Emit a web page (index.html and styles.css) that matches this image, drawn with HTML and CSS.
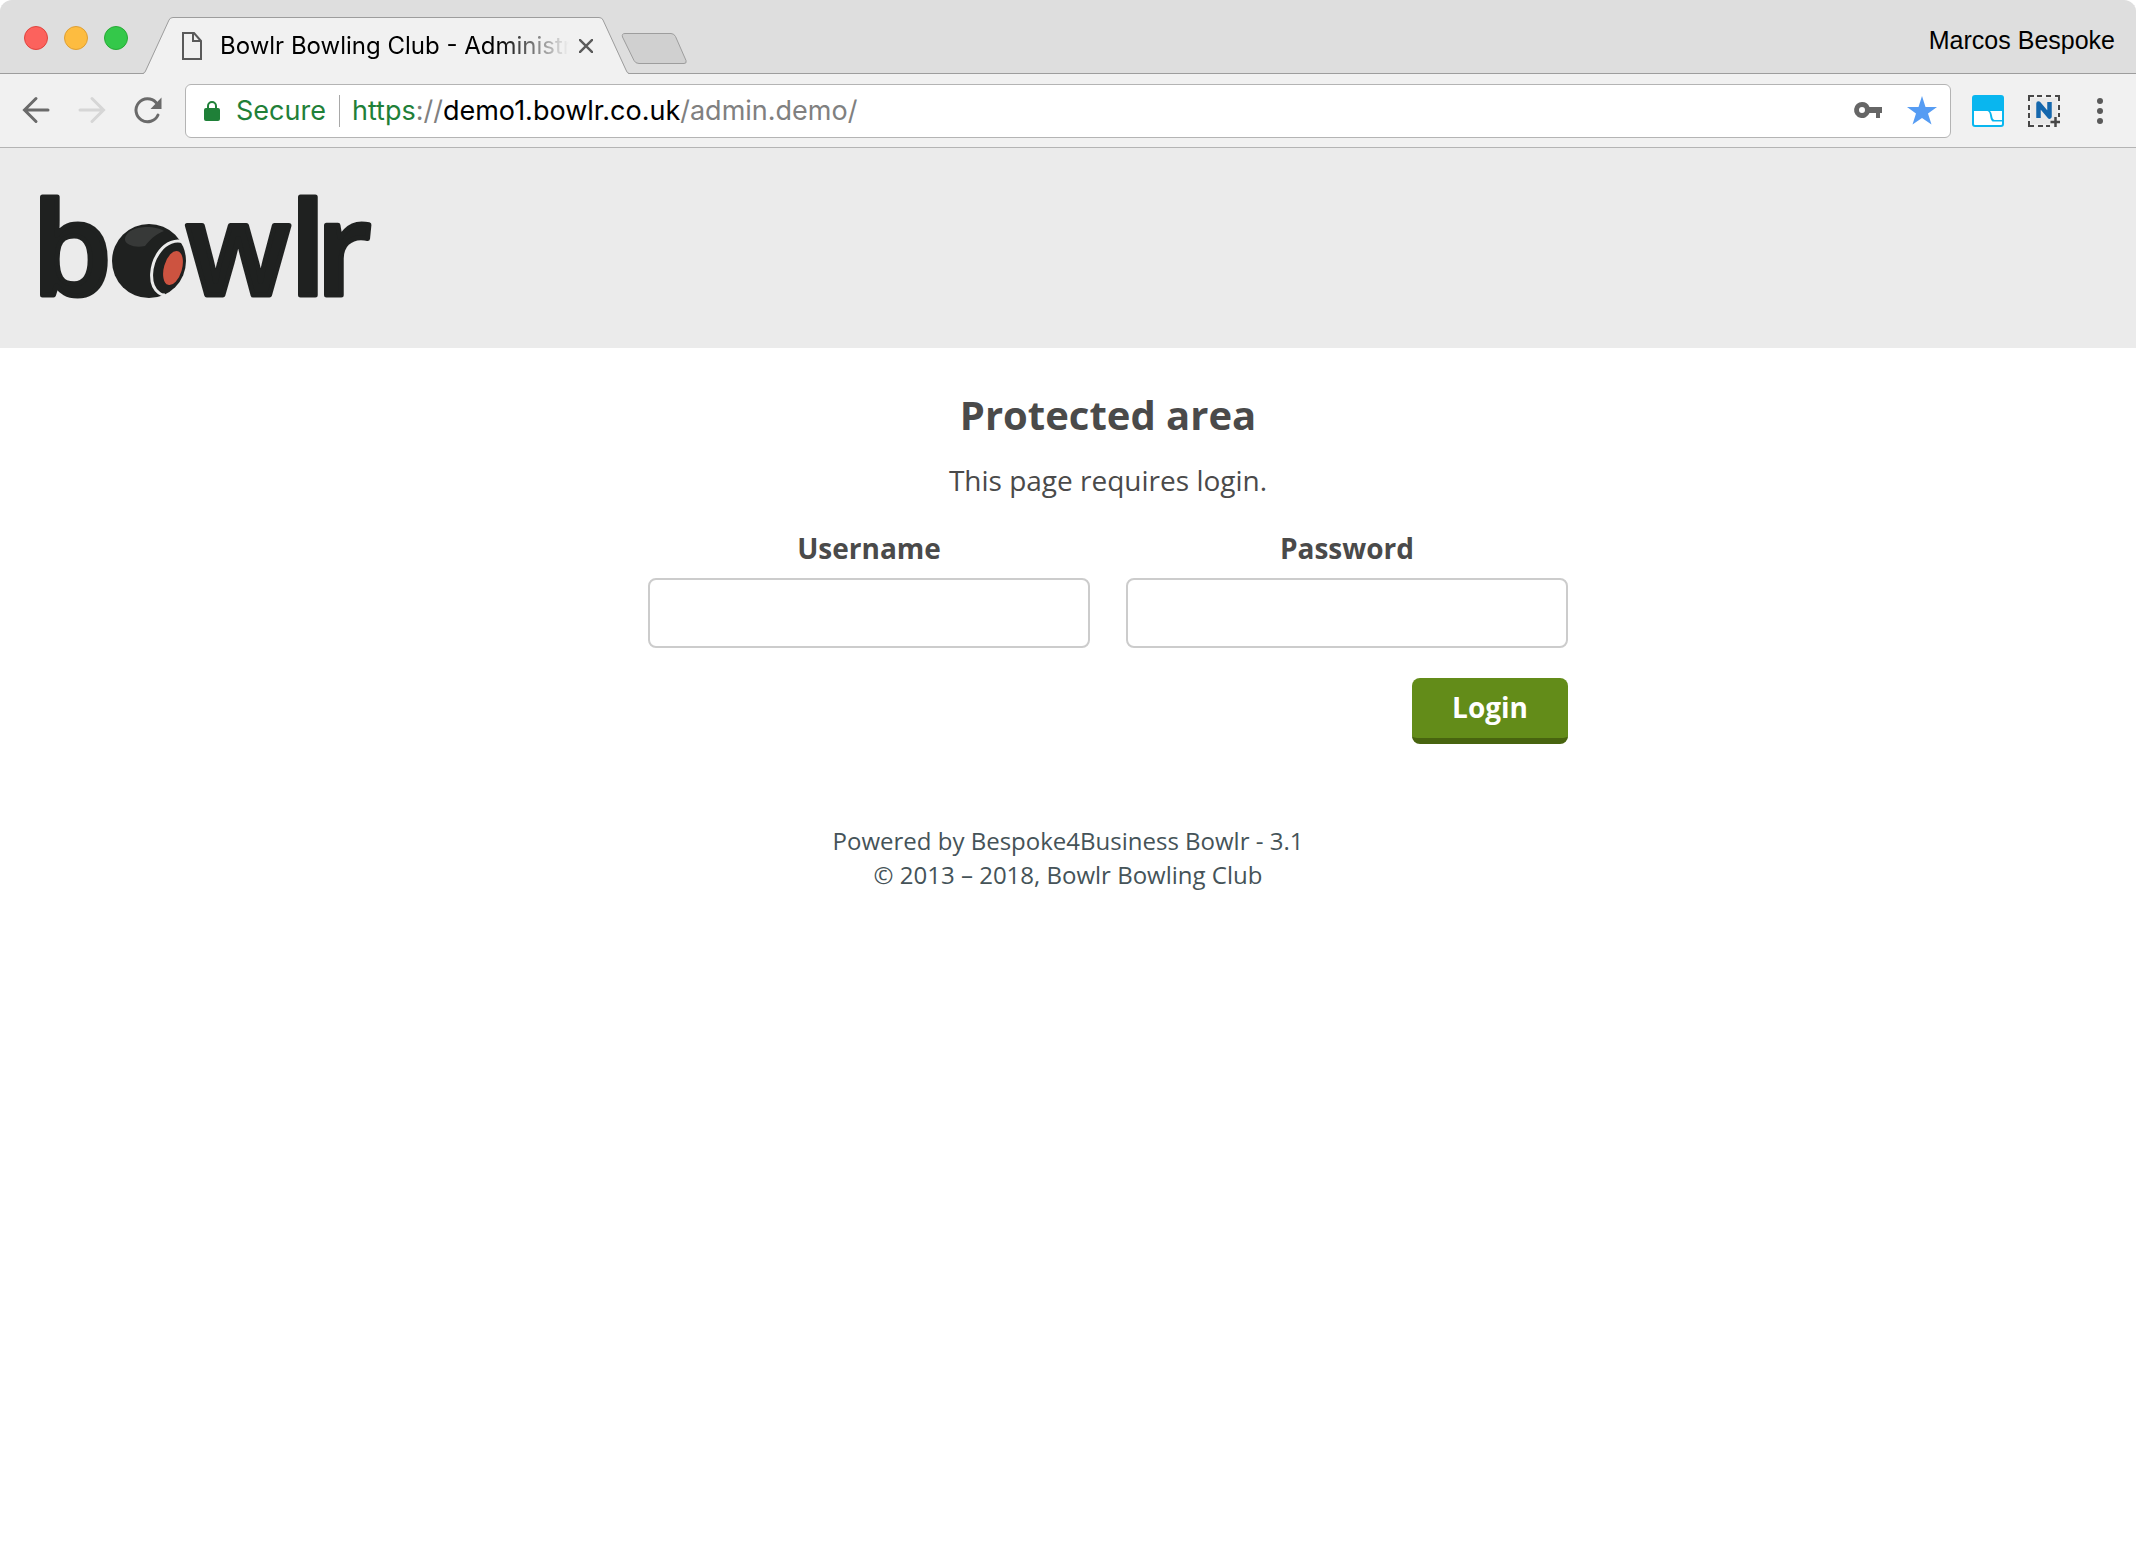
FILE: index.html
```html
<!DOCTYPE html>
<html lang="en">

<head>
  <meta charset="UTF-8">
  <meta name="viewport" content="width=device-width, initial-scale=1.0">
  <title>Bowlr Bowling Club - Administration</title>
  <link rel="stylesheet" href="styles.css">
</head>

<body>
  <!-- Browser window -->
  <div class="tab-strip">
    <div class="lights">
      <button class="light close" aria-label="Close window"></button>
      <button class="light minimise" aria-label="Minimise window"></button>
      <button class="light zoom" aria-label="Zoom window"></button>
    </div>
    <div class="tab">
      <svg class="tab-shape" viewBox="0 0 486 57" aria-hidden="true">
        <path class="tab-fill" d="M0 57 Q2 56 3 54 L26 3 Q27 .5 30 .5 H456 Q459 .5 460 3 L483 54 Q484 56 486 57 Z" />
        <path class="tab-line" d="M0 56.5 Q2 56 3 53 L26 3 Q27 .5 30 .5 H456 Q459 .5 460 3 L483 53 Q484 56 486 56.5" />
      </svg>
      <svg class="page-icon" viewBox="0 0 20 28" aria-hidden="true">
        <path d="M1 1h11l7 8v18H1zM11 1v8h8" fill="none" stroke="#5a5a5a" stroke-width="2" />
      </svg>
      <span class="tab-title">Bowlr Bowling Club - Administr</span>
      <button class="tab-close" aria-label="Close tab">
        <svg viewBox="0 0 14 14"><path d="M0 0l14 14M14 0L0 14" stroke="#5a5a5a" stroke-width="2.4" /></svg>
      </button>
    </div>
    <button class="new-tab" aria-label="New tab">
      <svg viewBox="0 0 66 32">
        <path d="M4 .5H50Q53 .5 54.500 3.500L65 27.500Q66 30.500 63 30.500H18Q14.500 30.500 13 27.500L1.500 4Q.5 .5 4 .5Z" fill="#d0d0d0" stroke="#9d9d9d" />
      </svg>
    </button>
    <span class="profile">Marcos Bespoke</span>
  </div>

  <div class="toolbar">
    <div class="tools">
      <button class="tool" aria-label="Back">
        <svg viewBox="0 0 32 32"><path d="M28 15H5M16 3.500L4.500 15L16 26.500" fill="none" stroke="#6a6a6a" stroke-width="3" stroke-linecap="round" /></svg>
      </button>
      <button class="tool" aria-label="Forward" disabled>
        <svg viewBox="0 0 32 32"><path d="M4 15H27M16 3.500L27.500 15L16 26.500" fill="none" stroke="#d6d6d6" stroke-width="3" stroke-linecap="round" /></svg>
      </button>
      <button class="tool" aria-label="Reload">
        <svg viewBox="0 0 32 32">
          <path d="M26 20A11.500 11.500 0 1 1 24 7.500" fill="none" stroke="#6a6a6a" stroke-width="3" stroke-linecap="round" />
          <path d="M29.500 2.500V14H18.500Z" fill="#6a6a6a" />
        </svg>
      </button>
    </div>
    <div class="address">
      <svg class="lock" viewBox="0 0 16 22" aria-hidden="true">
        <path d="M4 9V6a4 4 0 0 1 8 0V9" fill="none" stroke="#1f8038" stroke-width="2" />
        <rect y="8" width="16" height="13" rx="2" fill="#1f8038" />
      </svg>
      <span class="secure">Secure</span>
      <a class="url" href="https://demo1.bowlr.co.uk/admin.demo/"><span class="scheme">https</span>://<span class="host">demo1.bowlr.co.uk</span>/admin.demo/</a>
      <button class="address-tool" aria-label="Saved password">
        <svg viewBox="0 0 30 30">
          <path fill-rule="evenodd" d="M9 6a8 8 0 0 1 7.500 5H29v6h-2v5h-4v-5h-6.500A8 8 0 1 1 9 6ZM9 11a3 3 0 1 0 0 6a3 3 0 1 0 0-6Z" fill="#666" />
        </svg>
      </button>
      <button class="address-tool" aria-label="Edit bookmark">
        <svg viewBox="0 0 30 30"><path d="M15 0L18.500 11H30L21 17.500L24.500 28.500L15 22L5.500 28.500L9 17.500L0 11H11.500Z" fill="#569cf3" /></svg>
      </button>
    </div>
    <div class="tools">
      <button class="tool" aria-label="Window resizer">
        <svg viewBox="0 0 32 32">
          <rect width="32" height="32" rx="3" fill="#09b6ef" />
          <path d="M2 16H15.500Q17.500 16.500 18 20Q18.500 25 20.500 26.500H30V29Q30 30 29 30H3Q2 30 2 29Z" fill="#fff" />
          <path d="M18 16H30V25H22.500Q20.500 24.500 20 20.500Q19.500 17 18 16Z" fill="#fff" />
        </svg>
      </button>
      <button class="tool" aria-label="Web clipper">
        <svg viewBox="0 0 32 32">
          <rect x="3" y="3" width="26" height="26" fill="#e9e9e9" />
          <path d="M1 6V1H6M9 1H14M18 1H23M27 1H31V6M31 10V15M31 18V22M1 10V15M1 18V23M1 26V31H6M10 31H15M18 31H22" fill="none" stroke="#474747" stroke-width="2" />
          <path d="M10.500 23V8.500L21.500 21.500V7" fill="none" stroke="#1467ad" stroke-width="4.500" stroke-linejoin="round" />
          <path d="M27.500 22V32M22.500 27H32" stroke="#474747" stroke-width="2.500" />
        </svg>
      </button>
      <button class="tool" aria-label="Menu">
        <svg viewBox="0 0 32 32" fill="#5a5a5a"><circle cx="16" cy="6" r="3" /><circle cx="16" cy="16" r="3" /><circle cx="16" cy="26" r="3" /></svg>
      </button>
    </div>
  </div>

  <!-- Page -->
  <header class="site-header">
    <a class="logo" href="/" aria-label="bowlr">
      <svg viewBox="0 0 330 106">
        <g class="logo-text">
          <text x="-8" y="100">b</text>
          <text x="146" y="100">w<tspan x="250">l</tspan><tspan x="276">r</tspan></text>
        </g>
        <circle cx="109" cy="66" r="37" fill="#1f2120" />
        <path d="M85 45C85 36 96 32 107 32C114 32 121 34 124 36C114 40 110 45 105 51C95 53 86 50 85 45Z" fill="#373938" />
        <path d="M143 47C136 44 126 48 120 56C110 69 108 90 119 98Q121 100 125 100" fill="none" stroke="#ebebeb" stroke-width="3" />
        <ellipse cx="133" cy="73" rx="9" ry="17.500" transform="rotate(16 133 73)" fill="#cd5340" />
      </svg>
    </a>
  </header>

  <main class="content">
    <form class="login">
      <h1>Protected area</h1>
      <p>This page requires login.</p>
      <div class="fields">
        <div class="field">
          <label for="username">Username</label>
          <input type="text" id="username" name="username">
        </div>
        <div class="field">
          <label for="password">Password</label>
          <input type="password" id="password" name="password">
        </div>
      </div>
      <button type="submit" class="submit">Login</button>
    </form>
  </main>

  <footer class="site-footer">
    <p>Powered by Bespoke4Business Bowlr - 3.1</p>
    <p>© 2013 – 2018, Bowlr Bowling Club</p>
  </footer>
</body>

</html>
```
FILE: styles.css
```css
* {
  margin: 0;
  padding: 0;
  box-sizing: border-box;
}

body {
  background: #fff;
  color: #4a4a4a;
  font-family: "Open Sans", sans-serif;
  font-size: 28px;
  line-height: 40px;
}

button,
input {
  font: inherit;
}

button {
  border: none;
  background: none;
  cursor: pointer;
}

svg {
  display: block;
}

/* Tab strip */
.tab-strip {
  display: flex;
  align-items: flex-start;
  height: 74px;
  padding: 0 21px 0 24px;
  background: #dedede;
  border-radius: 12px 12px 0 0;
  box-shadow: inset 0 -1px #9d9d9d;
}

.lights {
  display: flex;
  gap: 16px;
  margin: 26px 15px 0 0;
}

.light {
  width: 24px;
  height: 24px;
  border: 1px solid;
  border-radius: 50%;
}

.light.close {
  background: #fc625d;
  border-color: #e0443e;
}

.light.minimise {
  background: #fdbc40;
  border-color: #de9f34;
}

.light.zoom {
  background: #34c84a;
  border-color: #27aa35;
}

.tab {
  position: relative;
  display: flex;
  align-items: center;
  width: 486px;
  height: 57px;
  margin-top: 17px;
  padding: 0 36px 0 39px;
}

.tab-shape {
  position: absolute;
  inset: 0;
}

.tab-fill {
  fill: #f1f1f1;
}

.tab-line {
  fill: none;
  stroke: #9d9d9d;
}

.page-icon {
  position: relative;
  width: 20px;
  flex: none;
}

.tab-title {
  position: relative;
  flex: 1;
  min-width: 0;
  margin: 0 10px 0 18px;
  color: #000;
  font-family: Inter, sans-serif;
  font-size: 24px;
  white-space: nowrap;
  mask-image: linear-gradient(to right, #000 80%, transparent);
}

.tab-close {
  position: relative;
  width: 14px;
  flex: none;
}

.new-tab {
  width: 66px;
  margin: 33px 0 0 -8px;
  z-index: 1;
}

.profile {
  margin: 20px 0 0 auto;
  color: #000;
  font-family: "Liberation Sans", sans-serif;
  font-size: 25px;
}

/* Toolbar */
.toolbar {
  display: flex;
  align-items: center;
  gap: 21px;
  height: 74px;
  padding: 0 20px;
  background: #f1f1f1;
  border-bottom: 1px solid #b4b4b4;
}

.tools {
  display: flex;
  gap: 24px;
}

.tool {
  width: 32px;
  height: 32px;
}

.address {
  display: flex;
  flex: 1;
  align-items: center;
  height: 54px;
  padding: 0 13px 0 18px;
  background: #fff;
  border: 1px solid #b4b4b4;
  border-radius: 6px;
  font-family: Inter, sans-serif;
  font-size: 27px;
}

.lock {
  width: 16px;
}

.secure {
  margin-left: 16px;
  padding-right: 13px;
  border-right: 1px solid #a8a8a8;
  color: #1f8038;
  line-height: 32px;
}

.url {
  flex: 1;
  margin-left: 12px;
  color: #808080;
  text-decoration: none;
}

.scheme {
  color: #1f8038;
}

.host {
  color: #000;
}

.address-tool {
  width: 30px;
  height: 30px;
  margin-left: 24px;
}

/* Site header */
.site-header {
  padding: 47px 40px;
  background: #ebebeb;
}

.logo {
  display: block;
  width: 330px;
}

.logo svg {
  overflow: visible;
}

.logo-text {
  font-family: "Open Sans", sans-serif;
  font-size: 128px;
  font-weight: 600;
  fill: #1f2120;
  stroke: #1f2120;
  stroke-width: 5px;
  stroke-linejoin: round;
}

/* Login form */
.content {
  max-width: 1000px;
  margin: 0 auto;
  padding: 40px 0 80px 80px;
}

.login {
  text-align: center;
}

.login h1 {
  margin-bottom: 18px;
  font-size: 40px;
  line-height: 54px;
}

.fields {
  display: grid;
  grid-template-columns: 1fr 1fr;
  gap: 36px;
  margin: 28px 0 30px;
}

.field label {
  display: block;
  margin-bottom: 10px;
  font-weight: 700;
}

.field input {
  display: block;
  width: 100%;
  height: 70px;
  padding: 0 16px;
  background: #fff;
  border: 2px solid #ccc;
  border-radius: 8px;
}

.submit {
  display: block;
  margin-left: auto;
  padding: 9px 40px 11px;
  background: #638c19;
  border-bottom: 6px solid #48640f;
  border-radius: 8px;
  color: #fff;
  font-weight: 700;
}

/* Footer */
.site-footer {
  color: #455358;
  font-size: 24px;
  line-height: 34px;
  text-align: center;
}
```
